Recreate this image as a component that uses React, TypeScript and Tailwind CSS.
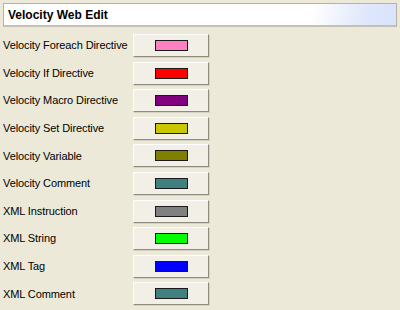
import React from "react";

const rows: { label: string; color: string }[] = [
  { label: "Velocity Foreach Directive", color: "#ff80c0" },
  { label: "Velocity If Directive", color: "#ff0000" },
  { label: "Velocity Macro Directive", color: "#800080" },
  { label: "Velocity Set Directive", color: "#c8c800" },
  { label: "Velocity Variable", color: "#808000" },
  { label: "Velocity Comment", color: "#408080" },
  { label: "XML Instruction", color: "#808080" },
  { label: "XML String", color: "#00ff00" },
  { label: "XML Tag", color: "#0000ff" },
  { label: "XML Comment", color: "#408080" },
];

export default function App() {
  return (
    <div
      className="w-[400px] h-[310px] bg-[#ece9d8] overflow-hidden text-[11px] text-black"
      style={{ fontFamily: "'Liberation Sans', Arial, sans-serif" }}
    >
      <div className="pt-[3px] px-[3px]">
        <div className="h-[24px] border border-[#b5b2a6] border-b-2 border-b-[#c4c0b4] bg-[linear-gradient(100deg,#ffffff_78%,#dfe7fb_92%,#d9e3fb)] flex items-center pl-[4px]">
          <span className="font-bold text-[12px]">Velocity Web Edit</span>
        </div>
      </div>
      <div className="flex flex-col gap-[4.6px] pt-[7px]">
        {rows.map((r) => (
          <div key={r.label} className="flex items-center h-[23px]">
            <div className="w-[133px] pl-[3px] whitespace-nowrap tracking-[-0.1px]">{r.label}</div>
            <div className="w-[76px] h-[23px] bg-[#f2f0e6] border border-t-white border-l-white border-r-[#8e8c80] border-b-[#8e8c80] shadow-[1px_1px_0_#d5d2c4] flex items-center justify-center">
              <div
                className="w-[33px] h-[11px] border border-[#1a1a1a]"
                style={{ backgroundColor: r.color }}
              />
            </div>
          </div>
        ))}
      </div>
    </div>
  );
}
